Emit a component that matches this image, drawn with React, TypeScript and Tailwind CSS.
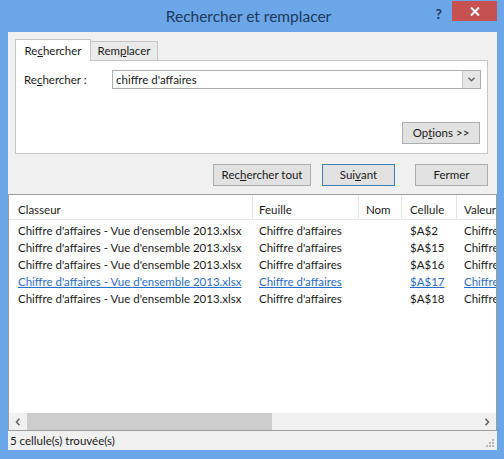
import React from 'react';

const rows = [
  { cell: '$A$2', link: false },
  { cell: '$A$15', link: false },
  { cell: '$A$16', link: false },
  { cell: '$A$17', link: true },
  { cell: '$A$18', link: false },
];

const font = { fontFamily: 'Lato, "Liberation Sans", sans-serif' };

function Btn({ children, className = '' }: { children: React.ReactNode; className?: string }) {
  return (
    <div
      className={`h-[22px] flex items-center justify-center border bg-[#e1e1e1] text-[11.5px] text-[#1a1a1a] ${className}`}
    >
      {children}
    </div>
  );
}

export default function App() {
  return (
    <div className="w-[504px] h-[459px] bg-[#6aa6e8] flex flex-col" style={font}>
      {/* Title bar */}
      <div className="h-[32px] shrink-0 grid grid-cols-[1fr_auto_1fr] pr-[7px]">
        <div />
        <div className="pt-[5px] text-[15.5px] text-[#1e395b]">Rechercher et remplacer</div>
        <div className="flex justify-end items-start">
          <span className="mt-[3px] mr-[10px] text-[14px] font-bold text-[#1e395b]">?</span>
          <div className="mt-[1px] w-[45px] h-[20px] bg-[#c75050] flex items-center justify-center">
            <svg width="10" height="9" viewBox="0 0 10 9">
              <path d="M1 0.5 L9 8.5 M9 0.5 L1 8.5" stroke="#fff" strokeWidth="2" />
            </svg>
          </div>
        </div>
      </div>

      {/* Client area */}
      <div className="flex-1 ml-[8px] mr-[7px] mb-[9px] bg-[#f0f0f0] flex flex-col">
        {/* Top section */}
        <div className="h-[162px] shrink-0 pt-[7px] pl-[7px] pr-[9px] flex flex-col">
          {/* Tabs */}
          <div className="flex items-end h-[21px]">
            <div className="relative z-10 -mb-px w-[76px] h-[22px] bg-white border border-b-0 border-[#c6c6c6] flex items-center justify-center text-[11.5px] text-[#1a1a1a]">
              Re<u>c</u>hercher
            </div>
            <div className="w-[67px] h-[19px] bg-[#eaeaea] border border-l-0 border-b-0 border-[#c6c6c6] flex items-center justify-center text-[11.5px] text-[#1a1a1a]">
              Rem<u>p</u>lacer
            </div>
          </div>
          {/* Panel */}
          <div className="h-[94px] bg-white border border-[#c6c6c6] flex flex-col justify-between pt-[9px] pb-[9px] pl-[8px] pr-[6px]">
            <div className="flex items-center h-[19px]">
              <div className="w-[88px] text-[11.5px] text-[#1a1a1a]">
                Re<u>c</u>hercher :
              </div>
              <div className="flex-1 h-[19px] border border-[#abadb3] flex items-center">
                <span className="flex-1 pl-[3px] text-[11.5px] text-[#1a1a1a]">chiffre d'affaires</span>
                <div className="w-[18px] h-[17px] bg-[#e6e6e6] border-l border-[#c8c8c8] flex items-center justify-center">
                  <svg width="7" height="5" viewBox="0 0 7 5">
                    <path d="M0.5 0.8 L3.5 3.8 L6.5 0.8" stroke="#606060" strokeWidth="1.3" fill="none" />
                  </svg>
                </div>
              </div>
            </div>
            <div className="flex justify-end pr-px">
              <Btn className="w-[78px] border-[#adadad]">
                Op<u>t</u>ions &gt;&gt;
              </Btn>
            </div>
          </div>
          {/* Buttons */}
          <div className="mt-[10px] flex justify-end">
            <Btn className="w-[98px] border-[#adadad]">
              Rec<u>h</u>ercher tout
            </Btn>
            <Btn className="ml-[11px] w-[73px] border-[#3c7fb1]">
              Sui<u>v</u>ant
            </Btn>
            <Btn className="ml-[20px] w-[73px] border-[#adadad]">Fermer</Btn>
          </div>
        </div>

        {/* Results list */}
        <div className="flex-1 min-w-0 bg-white border-t border-x border-[#9c9c9c] flex flex-col overflow-hidden">
          <div className="grid grid-cols-[243px_106px_43px_55px_minmax(0,1fr)] h-[25px] border-b border-[#e5e5e5] text-[11.5px] text-[#1a1a1a]">
            <div className="pl-[9px] pt-[6px]">Classeur</div>
            <div className="pl-[6px] pt-[6px] border-l border-[#e5e5e5]">Feuille</div>
            <div className="pl-[7px] pt-[6px] border-l border-[#e5e5e5]">Nom</div>
            <div className="pl-[8px] pt-[6px] border-l border-[#e5e5e5]">Cellule</div>
            <div className="pl-[7px] pt-[6px] border-l border-[#e5e5e5] whitespace-nowrap overflow-hidden">Valeur</div>
          </div>
          <div className="flex-1 pt-[2px]">
            {rows.map((r, i) => (
              <div
                key={i}
                className={`grid grid-cols-[243px_106px_43px_55px_minmax(0,1fr)] h-[17px] items-center text-[11.5px] whitespace-nowrap ${
                  r.link ? 'text-[#2a6cc7]' : 'text-[#1a1a1a]'
                }`}
              >
                <div className="pl-[9px]">
                  <span className={r.link ? 'underline' : ''}>Chiffre d'affaires - Vue d'ensemble 2013.xlsx</span>
                </div>
                <div className="pl-[7px]">
                  <span className={r.link ? 'underline' : ''}>Chiffre d'affaires</span>
                </div>
                <div />
                <div className="pl-[9px]">
                  <span className={r.link ? 'underline' : ''}>{r.cell}</span>
                </div>
                <div className="pl-[8px] overflow-hidden">
                  <span className={r.link ? 'underline' : ''}>Chiffre d'affaires</span>
                </div>
              </div>
            ))}
          </div>
          {/* Horizontal scrollbar */}
          <div className="h-[17px] shrink-0 bg-[#f0f0f0] flex items-center">
            <div className="w-[18px] h-full flex items-center justify-center">
              <svg width="6" height="8" viewBox="0 0 6 8">
                <path d="M4.5 0.8 L1.5 4 L4.5 7.2" stroke="#606060" strokeWidth="1.5" fill="none" />
              </svg>
            </div>
            <div className="w-[245px] h-full bg-[#cdcdcd]" />
            <div className="flex-1" />
            <div className="w-[18px] h-full flex items-center justify-center">
              <svg width="6" height="8" viewBox="0 0 6 8">
                <path d="M1.5 0.8 L4.5 4 L1.5 7.2" stroke="#606060" strokeWidth="1.5" fill="none" />
              </svg>
            </div>
          </div>
        </div>

        {/* Status bar */}
        <div className="h-[20px] shrink-0 border-t border-[#9c9c9c] flex items-center justify-between pl-[2px] pr-[2px]">
          <span className="text-[11.5px] text-[#1a1a1a]">5 cellule(s) trouvée(s)</span>
          <svg width="10" height="10" viewBox="0 0 10 10" className="self-end mb-[2px]">
            <rect x="7" y="1" width="2" height="2" fill="#b8b8b8" />
            <rect x="4" y="4" width="2" height="2" fill="#b8b8b8" />
            <rect x="7" y="4" width="2" height="2" fill="#b8b8b8" />
            <rect x="1" y="7" width="2" height="2" fill="#b8b8b8" />
            <rect x="4" y="7" width="2" height="2" fill="#b8b8b8" />
            <rect x="7" y="7" width="2" height="2" fill="#b8b8b8" />
          </svg>
        </div>
      </div>
    </div>
  );
}
